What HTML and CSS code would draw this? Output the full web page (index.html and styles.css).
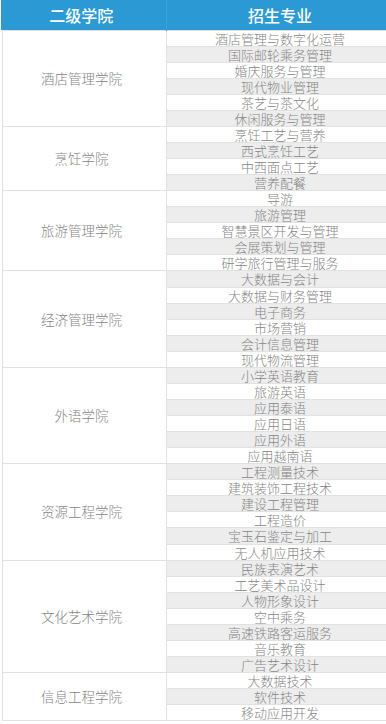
FILE: index.html
```html
<!DOCTYPE html>
<html lang="zh-CN">
<head>
  <meta charset="UTF-8">
  <meta name="viewport" content="width=device-width, initial-scale=1.0">
  <title>招生专业</title>
  <link rel="stylesheet" href="styles.css">
</head>
<body>
  <table class="major-table">
    <thead>
      <tr>
        <th class="col-college">二级学院</th>
        <th class="col-major">招生专业</th>
      </tr>
    </thead>
    <tbody>
      <tr><td class="college" rowspan="6">酒店管理学院</td><td>酒店管理与数字化运营</td></tr>
      <tr class="alt"><td>国际邮轮乘务管理</td></tr>
      <tr><td>婚庆服务与管理</td></tr>
      <tr class="alt"><td>现代物业管理</td></tr>
      <tr><td>茶艺与茶文化</td></tr>
      <tr class="alt"><td>休闲服务与管理</td></tr>

      <tr><td class="college" rowspan="4">烹饪学院</td><td>烹饪工艺与营养</td></tr>
      <tr class="alt"><td>西式烹饪工艺</td></tr>
      <tr><td>中西面点工艺</td></tr>
      <tr class="alt"><td>营养配餐</td></tr>

      <tr><td class="college" rowspan="5">旅游管理学院</td><td>导游</td></tr>
      <tr class="alt"><td>旅游管理</td></tr>
      <tr><td>智慧景区开发与管理</td></tr>
      <tr class="alt"><td>会展策划与管理</td></tr>
      <tr><td>研学旅行管理与服务</td></tr>

      <tr class="alt"><td class="college" rowspan="6">经济管理学院</td><td>大数据与会计</td></tr>
      <tr><td>大数据与财务管理</td></tr>
      <tr class="alt"><td>电子商务</td></tr>
      <tr><td>市场营销</td></tr>
      <tr class="alt"><td>会计信息管理</td></tr>
      <tr><td>现代物流管理</td></tr>

      <tr class="alt"><td class="college" rowspan="6">外语学院</td><td>小学英语教育</td></tr>
      <tr><td>旅游英语</td></tr>
      <tr class="alt"><td>应用泰语</td></tr>
      <tr><td>应用日语</td></tr>
      <tr class="alt"><td>应用外语</td></tr>
      <tr><td>应用越南语</td></tr>

      <tr class="alt"><td class="college" rowspan="6">资源工程学院</td><td>工程测量技术</td></tr>
      <tr><td>建筑装饰工程技术</td></tr>
      <tr class="alt"><td>建设工程管理</td></tr>
      <tr><td>工程造价</td></tr>
      <tr class="alt"><td>宝玉石鉴定与加工</td></tr>
      <tr><td>无人机应用技术</td></tr>

      <tr class="alt"><td class="college" rowspan="7">文化艺术学院</td><td>民族表演艺术</td></tr>
      <tr><td>工艺美术品设计</td></tr>
      <tr class="alt"><td>人物形象设计</td></tr>
      <tr><td>空中乘务</td></tr>
      <tr class="alt"><td>高速铁路客运服务</td></tr>
      <tr><td>音乐教育</td></tr>
      <tr class="alt"><td>广告艺术设计</td></tr>

      <tr><td class="college" rowspan="3">信息工程学院</td><td>大数据技术</td></tr>
      <tr class="alt"><td>软件技术</td></tr>
      <tr><td>移动应用开发</td></tr>
    </tbody>
  </table>
</body>
</html>
```

FILE: styles.css
```css
/* Reset */
* {
  margin: 0;
  padding: 0;
  box-sizing: border-box;
}

body {
  font-family: "Noto Sans CJK SC", "Noto Sans", sans-serif;
  background-color: #fff;
  color: #858585;
  overflow: hidden;
}

/* Table */
.major-table {
  width: 392px;
  margin-left: 2px;
  border-collapse: collapse;
  table-layout: fixed;
}

.major-table th {
  height: 30px;
  background-color: #2b9ad4;
  color: #fff;
  font-size: 16px;
  font-weight: 500;
  text-align: center;
  border-right: 1px solid #3aa3da;
}

.major-table th.col-college {
  width: 164px;
  box-shadow: -2px 0 0 #2b9ad4;
  padding-right: 6px;
}

.major-table td {
  height: 16.07px;
  font-size: 13px;
  font-weight: 300;
  line-height: 15px;
  text-align: center;
  border: 1px solid #e2e2e2;
  white-space: nowrap;
}

.major-table td.college {
  background-color: #fff;
  padding-right: 6px;
  font-size: 13.5px;
}

.major-table tr.alt td {
  background-color: #ededed;
}

.major-table tr.alt td.college {
  background-color: #fff;
}
```
